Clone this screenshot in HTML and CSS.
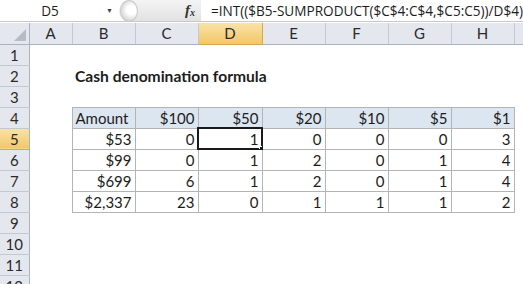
FILE: index.html
```html
<!DOCTYPE html>
<html lang="en">
<head>
    <meta charset="UTF-8">
    <title>Cash denomination formula</title>
    <link rel="stylesheet" href="styles.css">
</head>
<body>
    <div class="formula-bar">
        <div class="name-box">
            <span class="cell-ref">D5</span>
            <span class="drop">&#9660;</span>
        </div>
        <div class="fx-box">
            <span class="knob"></span>
            <span class="fx">f<sub>x</sub></span>
        </div>
        <div class="formula">=INT(($B5-SUMPRODUCT($C$4:C$4,$C5:C5))/D$4)</div>
    </div>

    <table class="sheet">
        <colgroup>
            <col class="c-hdr">
            <col class="c-a">
            <col class="c-std"><col class="c-std"><col class="c-d">
            <col class="c-std"><col class="c-std"><col class="c-std"><col class="c-std">
            <col>
        </colgroup>
        <tr class="col-heads">
            <th class="corner"></th>
            <th>A</th><th>B</th><th>C</th><th class="active">D</th>
            <th>E</th><th>F</th><th>G</th><th>H</th><th></th>
        </tr>
        <tr><th>1</th><td></td><td></td><td></td><td></td><td></td><td></td><td></td><td></td><td></td></tr>
        <tr><th>2</th><td></td><td colspan="4" class="title">Cash denomination formula</td><td></td><td></td><td></td><td></td></tr>
        <tr><th>3</th><td></td><td></td><td></td><td></td><td></td><td></td><td></td><td></td><td></td></tr>
        <tr class="tbl-head">
            <th>4</th><td></td>
            <td class="t left">Amount</td><td class="t">$100</td><td class="t">$50</td><td class="t">$20</td>
            <td class="t">$10</td><td class="t">$5</td><td class="t">$1</td><td></td>
        </tr>
        <tr>
            <th class="active">5</th><td></td>
            <td class="t">$53</td><td class="t">0</td><td class="t selected">1</td><td class="t">0</td>
            <td class="t">0</td><td class="t">0</td><td class="t">3</td><td></td>
        </tr>
        <tr>
            <th>6</th><td></td>
            <td class="t">$99</td><td class="t">0</td><td class="t">1</td><td class="t">2</td>
            <td class="t">0</td><td class="t">1</td><td class="t">4</td><td></td>
        </tr>
        <tr>
            <th>7</th><td></td>
            <td class="t">$699</td><td class="t">6</td><td class="t">1</td><td class="t">2</td>
            <td class="t">0</td><td class="t">1</td><td class="t">4</td><td></td>
        </tr>
        <tr>
            <th>8</th><td></td>
            <td class="t">$2,337</td><td class="t">23</td><td class="t">0</td><td class="t">1</td>
            <td class="t">1</td><td class="t">1</td><td class="t">2</td><td></td>
        </tr>
        <tr><th>9</th><td></td><td></td><td></td><td></td><td></td><td></td><td></td><td></td><td></td></tr>
        <tr><th>10</th><td></td><td></td><td></td><td></td><td></td><td></td><td></td><td></td><td></td></tr>
        <tr><th>11</th><td></td><td></td><td></td><td></td><td></td><td></td><td></td><td></td><td></td></tr>
        <tr><th>12</th><td></td><td></td><td></td><td></td><td></td><td></td><td></td><td></td><td></td></tr>
    </table>
</body>
</html>
```

FILE: styles.css
```css
:root {
    --hdr-bg: #e4e8ee;
    --hdr-line: #c3c9d1;
    --grid-line: #b4b4b4;
    --tbl-head: #dce6f1;
    --active-bg: #f6d48a;
    --text: #1c1c1c;
}

body {
    margin: 0;
    padding: 0;
    background: white;
    color: var(--text);
    font-family: Lato, "Open Sans", sans-serif;
    overflow: hidden;
}

.formula-bar {
    display: flex;
    align-items: center;
    height: 21px;
    border-bottom: 1px solid #c8c8c8;
    margin-bottom: 1px;
    font-family: "Open Sans", sans-serif;
    font-size: 13.6px;
}

.name-box {
    display: flex;
    align-items: center;
    width: 122px;
    height: 100%;
}

.cell-ref {
    width: 100px;
    text-align: center;
}

.drop {
    font-size: 7px;
    color: #444;
    margin-left: 6px;
}

.fx-box {
    display: flex;
    align-items: center;
    justify-content: space-between;
    width: 84px;
    height: 100%;
    background: linear-gradient(#f4f4f4, #e2e2e2);
    border-radius: 11px 0 0 11px;
}

.knob {
    width: 16px;
    height: 20px;
    border-radius: 50%;
    margin-left: 1px;
    background: radial-gradient(circle at 65% 45%, #ffffff 30%, #d4d4d4 75%);
    border: 1px solid #c9c9c9;
}

.fx {
    font-family: "Liberation Serif", serif;
    font-style: italic;
    font-weight: bold;
    font-size: 15px;
    color: #333;
    margin-right: 6px;
}

.fx sub {
    font-size: 10px;
    vertical-align: -1px;
}

.formula {
    padding-left: 10px;
    white-space: nowrap;
}

.sheet {
    border-collapse: collapse;
    table-layout: fixed;
    width: 540px;
    font-size: 15px;
}

.c-hdr { width: 29px; }
.c-a { width: 43px; }
.c-std { width: 63px; }
.c-d { width: 64px; }

.sheet th {
    background: var(--hdr-bg);
    font-weight: normal;
    color: #2a2a2a;
    border-right: 1px solid var(--hdr-line);
    border-bottom: 1px solid var(--hdr-line);
    padding: 0;
}

.sheet tr {
    height: 21px;
}

.col-heads {
    height: 23px;
}

.col-heads th {
    border-bottom-color: #a9b3bf;
}

.sheet tr > th:first-child {
    text-align: center;
    border-right-color: #a9b3bf;
}

.sheet th.active {
    background: linear-gradient(#f9e2a8, #f2c766);
    border-color: #d6a94c;
}

.corner {
    position: relative;
}

.corner::after {
    content: "";
    position: absolute;
    right: 3px;
    bottom: 3px;
    border-left: 12px solid transparent;
    border-bottom: 12px solid #b7bcc4;
}

.sheet td {
    padding: 0 3px;
    white-space: nowrap;
    overflow: hidden;
}

.title {
    font-weight: bold;
    font-size: 15.6px;
}

.t {
    border: 1px solid var(--grid-line);
    text-align: right;
}

.t.left {
    text-align: left;
}

.tbl-head .t {
    background: var(--tbl-head);
}

.selected {
    position: relative;
    outline: 2px solid #1a1a1a;
    outline-offset: -1px;
}

.selected::after {
    content: "";
    position: absolute;
    right: -4px;
    bottom: -4px;
    width: 5px;
    height: 5px;
    background: #1a1a1a;
    border: 1px solid white;
}
```
